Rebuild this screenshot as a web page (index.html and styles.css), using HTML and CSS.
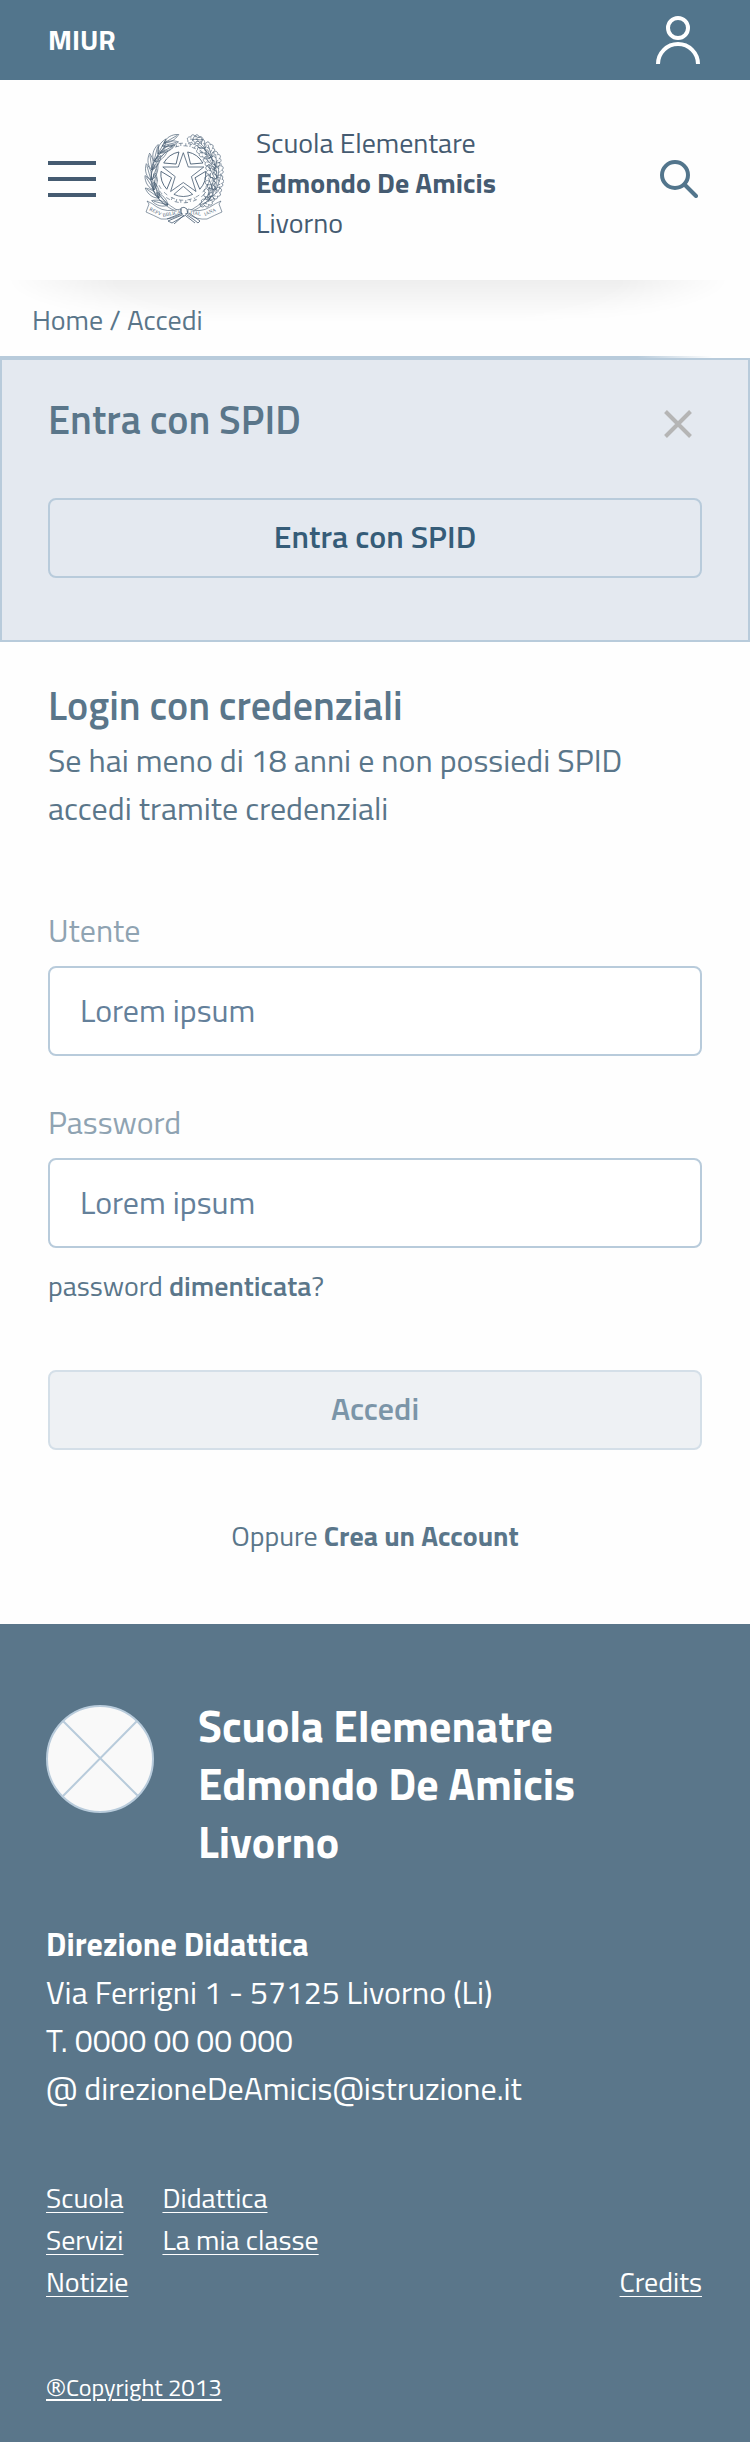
FILE: index.html
```html
<!DOCTYPE html>
<html lang="it">
<head>
<meta charset="utf-8">
<meta name="viewport" content="width=device-width, initial-scale=1">
<title>Accedi - Scuola Elementare Edmondo De Amicis</title>
<link rel="stylesheet" href="styles.css">
</head>
<body>
<div class="topbar">
  <a class="topbar-brand" href="#">MIUR</a>
  <button class="icon-button" type="button" aria-label="Area personale">
    <svg class="icon-user" viewBox="0 0 44 48" fill="none" stroke="currentColor" stroke-width="4"><circle cx="22" cy="12" r="10"/><path d="M2 48a20 20 0 0 1 40 0"/></svg>
  </button>
</div>

<header class="header">
  <button class="icon-button" type="button" aria-label="Menu">
    <svg class="icon-menu" viewBox="0 0 48 36" fill="none" stroke="currentColor" stroke-width="4"><path d="M0 2h48M0 18h48M0 34h48"/></svg>
  </button>
  <svg class="emblem" viewBox="0 0 80 90" fill="none" stroke="currentColor" stroke-width=".6" role="img" aria-label="Emblema della Repubblica Italiana">
    <defs>
      <path id="olive" d="M0 0C-3.500-4-4-11 0-17C3-11 3-5 0 0V-15"/>
      <path id="oak" d="M0 0C-3 0-4-3-2-4C-5-4-6-8-3-8C-6-10-4-13-2-12C-3-15 0-17 1-15C4-16 4-12 3-11C6-10 5-7 3-7C5-5 4-2 2-3C2-1 1 0 0 0M0 0V-13M0-5l-2-2M0-9l2-2"/>
      <path id="pane" d="M0 12.300L9.400 20.400A22.600 22.600 0 0 1-9.400 20.400Z"/>
    </defs>
    <circle cx="39.300" cy="39" r="27.200" stroke-dasharray="4.300 4.243"/>
    <circle cx="39.300" cy="39" r="29.800" stroke-dasharray="4.200 5.163" stroke-dashoffset="-4.500"/>
    <path d="M36.800 9.200v2.800M41.800 9.200v2.800M46.500 10.200l-.7 2.800M51.400 12l-1.300 2.500M27.200 12l1.300 2.500M32.100 10.200l.7 2.800M36.800 68.800v-2.800M41.800 68.800v-2.800M46.500 67.800l-.7-2.800M51.400 66l-1.300-2.500M27.200 66l1.300-2.500M32.100 67.800l.7-2.800"/>
    <g stroke-width=".8">
      <path d="M39.300 18.700L44.300 33H59.800L47.400 42.600L52 57.500L39.300 48.500L26.600 57.500L31.200 42.600L18.800 33H34.300Z"/>
      <g transform="translate(39.300 40)">
        <use href="#pane"/><use href="#pane" transform="rotate(72)"/><use href="#pane" transform="rotate(144)"/><use href="#pane" transform="rotate(216)"/><use href="#pane" transform="rotate(288)"/>
      </g>
    </g>
    <path d="M39 80C18 73 7 60 7 44C7 30 14 18 25 11M37 78C22 71 12 60 10 46"/>
    <g>
      <use href="#olive" transform="translate(24 71) rotate(-75)"/><use href="#olive" transform="translate(24 71) rotate(-42)"/>
      <use href="#olive" transform="translate(15 64) rotate(-54)"/><use href="#olive" transform="translate(15 64) rotate(-18)"/>
      <use href="#olive" transform="translate(10 56) rotate(-32)"/><use href="#olive" transform="translate(10 56) rotate(6)"/>
      <use href="#olive" transform="translate(7 46) rotate(-16)"/><use href="#olive" transform="translate(8 46) rotate(20)"/>
      <use href="#olive" transform="translate(8 36) rotate(-8)"/><use href="#olive" transform="translate(8 36) rotate(32)"/>
      <use href="#olive" transform="translate(10 27) rotate(14)"/><use href="#olive" transform="translate(11 28) rotate(48)"/>
      <use href="#olive" transform="translate(14 20) rotate(28)"/><use href="#olive" transform="translate(16 19) rotate(62)"/>
      <use href="#olive" transform="translate(20 9) rotate(60)"/><use href="#olive" transform="translate(18 12) rotate(76)"/>
    </g>
    <path d="M41 80C62 73 73 60 73 44C73 30 66 18 54 10M43 78C58 71 67 61 69 48"/>
    <g transform="translate(80 0) scale(-1 1)">
      <use href="#oak" transform="translate(24 71) rotate(-66)"/>
      <use href="#oak" transform="translate(15 65) rotate(-50)"/><use href="#oak" transform="translate(17 66) rotate(-12)"/>
      <use href="#oak" transform="translate(8 56) rotate(-20)"/><use href="#oak" transform="translate(11 56) rotate(20)"/>
      <use href="#oak" transform="translate(6 44) rotate(-4)"/><use href="#oak" transform="translate(9 45) rotate(26)"/>
      <use href="#oak" transform="translate(7 33) rotate(6)"/><use href="#oak" transform="translate(9 35) rotate(40)"/>
      <use href="#oak" transform="translate(12 23) rotate(18)"/><use href="#oak" transform="translate(14 24) rotate(52)"/>
      <use href="#oak" transform="translate(19 14) rotate(44)"/><use href="#oak" transform="translate(21 6) rotate(86)"/>
    </g>
    <path fill="#fefefe" d="M3 67L5 70L2 78Q9 81 17 85Q27 86 37 80V75Q22 79 13 73Q8 69 3 67ZM77 67L75 70L78 78Q71 81 63 85Q53 86 44 80V75Q57 79 66 73Q72 69 77 67Z"/>
    <path stroke-width=".8" d="M37 74Q40 72 43 75Q45 79 41 82Q36 82 37 74ZM38 81L24 87L28 89L40 82M36 80L23 85M43 81L49 85L54 89L56 87L45 79M39 82L30 90M42 82L51 89"/>
    <g class="emblem-text">
      <text transform="translate(5 76) rotate(27)">REPV</text>
      <text transform="translate(19 83) rotate(-12)">BBLICA</text>
      <text transform="translate(46 80) rotate(8)">ITAL</text>
      <text transform="translate(61 82) rotate(-24)">IANA</text>
    </g>
  </svg>
  <div class="school">Scuola Elementare<br><strong>Edmondo De Amicis</strong><br>Livorno</div>
  <button class="icon-button icon-button-search" type="button" aria-label="Cerca">
    <svg class="icon-search" viewBox="0 0 38 38" fill="none" stroke="currentColor" stroke-width="4" stroke-linecap="round"><circle cx="15" cy="15" r="13"/><path d="M25 25l11 11"/></svg>
  </button>
</header>

<nav class="breadcrumb" aria-label="Percorso"><a href="#">Home</a> / <a href="#">Accedi</a></nav>

<main>
  <section class="spid">
    <div class="spid-head">
      <h2 class="title">Entra con SPID</h2>
      <button class="icon-button icon-button-close" type="button" aria-label="Chiudi">
        <svg class="icon-close" viewBox="0 0 28 28" fill="none" stroke="currentColor" stroke-width="4"><path d="M1.500 1.500l25 25M26.500 1.500l-25 25"/></svg>
      </button>
    </div>
    <button class="button" type="button">Entra con SPID</button>
  </section>

  <section class="login">
    <h2 class="title">Login con credenziali</h2>
    <p class="intro">Se hai meno di 18 anni e non possiedi SPID accedi tramite credenziali</p>
    <form class="form">
      <div class="field">
        <label class="label" for="utente">Utente</label>
        <input class="input" id="utente" type="text" placeholder="Lorem ipsum">
      </div>
      <div class="field">
        <label class="label" for="password">Password</label>
        <input class="input" id="password" type="password" placeholder="Lorem ipsum">
      </div>
      <a class="forgot" href="#">password <strong>dimenticata</strong>?</a>
      <button class="button button-disabled" type="submit" disabled>Accedi</button>
    </form>
    <p class="signup">Oppure <a href="#">Crea un Account</a></p>
  </section>
</main>

<footer class="footer">
  <div class="footer-head">
    <svg class="footer-logo" viewBox="0 0 108 108" fill="#f9f9f9" stroke="#b8cbdb" stroke-width="2" aria-hidden="true"><circle cx="54" cy="54" r="53"/><path d="M17 16l75 75M91 16L17 91"/></svg>
    <h2 class="footer-title">Scuola Elemenatre<br>Edmondo De Amicis<br>Livorno</h2>
  </div>
  <address class="address"><strong>Direzione Didattica</strong><br>Via Ferrigni 1 - 57125 Livorno (Li)<br>T. 0000 00 00 000<br>@ direzioneDeAmicis@istruzione.it</address>
  <div class="footer-links">
    <nav class="footer-nav" aria-label="Sezioni">
      <a href="#">Scuola</a><a href="#">Servizi</a><a href="#">Notizie</a><a href="#">Didattica</a><a href="#">La mia classe</a>
    </nav>
    <a href="#">Credits</a>
  </div>
  <a class="copyright" href="#"><span class="registered">®</span>Copyright 2013</a>
</footer>
</body>
</html>
```

FILE: styles.css
```css
*,
*::before,
*::after {
  box-sizing: border-box;
}

body {
  margin: 0;
  background: #fefefe;
  color: #5a768a;
  font-family: "Titillium Web", Roboto, sans-serif;
  font-size: 28px;
  font-weight: 400;
  line-height: 40px;
}

h2,
p {
  margin: 0;
}

a {
  color: inherit;
  text-decoration: none;
}

strong {
  font-weight: 700;
}

svg {
  display: block;
  flex: none;
}

button,
input {
  font: inherit;
}

.icon-button {
  padding: 0;
  border: 0;
  background: none;
  color: inherit;
  cursor: pointer;
}

.topbar {
  display: flex;
  align-items: center;
  justify-content: space-between;
  padding: 16px 50px 16px 48px;
  background: #52758c;
  color: #fff;
}

.topbar-brand {
  font-weight: 700;
}

.icon-user {
  width: 44px;
  height: 48px;
}

.header {
  display: flex;
  align-items: center;
  padding: 35px 48px 37px;
  color: #455b71;
}

.icon-menu {
  width: 48px;
  height: 36px;
}

.emblem {
  width: 80px;
  height: 90px;
  margin: 0 32px 0 48px;
}

.emblem-text {
  fill: currentColor;
  stroke: none;
  font-family: "Liberation Serif", serif;
  font-size: 5px;
}

.school {
  padding-top: 8px;
}

.icon-button-search {
  margin-left: auto;
  padding-right: 4px;
  color: #52758c;
}

.icon-search {
  width: 38px;
  height: 38px;
}

.breadcrumb {
  position: relative;
  padding: 20px 32px 18px;
  background: linear-gradient(90deg, #b8cbdb 85%, transparent 95%) bottom / 100% 2px no-repeat;
}

.breadcrumb::before {
  content: "";
  position: absolute;
  inset: 0 3% 46% 1%;
  background: linear-gradient(#00000010, transparent);
  -webkit-mask-image: radial-gradient(ellipse 50% 140% at 50% 0, #000 70%, transparent);
  mask-image: radial-gradient(ellipse 50% 140% at 50% 0, #000 70%, transparent);
  pointer-events: none;
}

.title {
  font-size: 40px;
  font-weight: 600;
  line-height: 48px;
}

.spid {
  padding: 36px 46px 62px;
  border: 2px solid #b8cbdb;
  background: #e4e9f0;
}

.spid-head {
  display: flex;
  align-items: center;
  justify-content: space-between;
  margin-bottom: 54px;
}

.icon-button-close {
  padding: 8px 10px 0 0;
  color: #b5b5b5;
}

.icon-close {
  width: 28px;
  height: 28px;
}

.button {
  display: block;
  width: 100%;
  padding: 12px 24px 16px;
  border: 2px solid #b8cbdb;
  border-radius: 8px;
  background: transparent;
  color: #355c78;
  font-size: 32px;
  font-weight: 600;
  line-height: 48px;
}

.button-disabled {
  border-color: #d4dfe8;
  background: #eef1f4;
  color: #7b95a8;
}

.login {
  padding: 40px 48px 68px;
}

.intro {
  margin: 6px 0 74px;
  font-size: 32px;
  line-height: 48px;
}

.field {
  display: grid;
  gap: 12px;
}

.field + .field {
  margin-top: 42px;
}

.label {
  color: #8fa3b2;
  font-size: 32px;
  line-height: 48px;
}

.input {
  width: 100%;
  padding: 18px 30px 20px;
  border: 2px solid #b8cbdb;
  border-radius: 8px;
  background: #fff;
  color: #5a768a;
  font-size: 32px;
  line-height: 48px;
  height: 90px;
}

.input::placeholder {
  color: #64809a;
  opacity: 1;
}

.forgot {
  display: block;
  margin: 18px 0 64px;
}

.forgot strong {
  font-weight: 600;
}

.signup {
  margin-top: 66px;
  text-align: center;
}

.signup a {
  font-weight: 700;
}

.footer {
  padding: 73px 48px 37px 46px;
  background: #5a768a;
  color: #fff;
}

.footer-head {
  display: flex;
  gap: 44px;
  align-items: flex-start;
}

.footer-logo {
  width: 108px;
  height: 108px;
  margin-top: 8px;
}

.footer-title {
  font-size: 44px;
  font-weight: 700;
  line-height: 58px;
}

.address {
  margin: 49px 0 65px;
  font-size: 32px;
  font-style: normal;
  line-height: 48px;
}

.footer-links {
  display: flex;
  align-items: flex-end;
  justify-content: space-between;
  line-height: 42px;
}

.footer-nav {
  display: grid;
  grid-auto-flow: column;
  grid-template-rows: repeat(3, auto);
  column-gap: 34px;
  justify-items: start;
}

.footer-links a {
  text-decoration: underline 1px;
  text-underline-offset: 4px;
}

.copyright {
  display: inline-block;
  margin-top: 66px;
  font-size: 24px;
  line-height: 36px;
  text-decoration: underline 2px;
  text-underline-offset: 3px;
  vertical-align: top;
}

.registered {
  font-family: "Open Sans", sans-serif;
  line-height: 1;
}
```
